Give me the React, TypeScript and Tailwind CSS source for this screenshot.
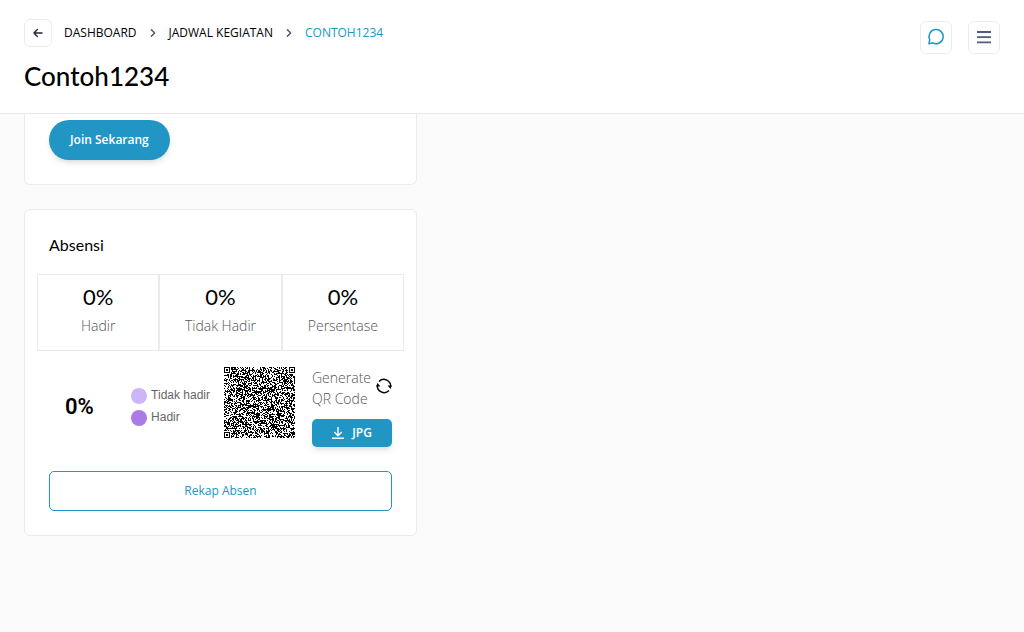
import React from "react";

const ACCENT = "#2196c5";

function Chevron() {
  return (
    <svg width="16" height="16" viewBox="0 0 24 24" fill="none" stroke="#475569" strokeWidth="2" strokeLinecap="round" strokeLinejoin="round" aria-hidden="true">
      <path d="M9.5 7l5 5-5 5" />
    </svg>
  );
}

const MODULES = 85;

function buildCode(): string {
  let seed = 20731;
  const next = () => {
    seed = (seed * 1103515245 + 12345) % 2147483648;
    return seed / 2147483648;
  };
  const finder = (x: number, y: number): boolean | null => {
    const corners = [
      [0, 0],
      [MODULES - 7, 0],
      [0, MODULES - 7],
    ];
    for (const [cx, cy] of corners) {
      const d = Math.max(Math.abs(x - cx - 3), Math.abs(y - cy - 3));
      if (d <= 4) return d !== 2 && d !== 4;
    }
    return null;
  };
  let path = "";
  for (let y = 0; y < MODULES; y++) {
    for (let x = 0; x < MODULES; x++) {
      const fixed = finder(x, y);
      const dark = next() < 0.5;
      if (fixed === null ? dark : fixed) path += `M${x} ${y}h1v1h-1z`;
    }
  }
  return path;
}

const codePath = buildCode();

const stats = [
  { value: "0%", label: "Hadir" },
  { value: "0%", label: "Tidak Hadir" },
  { value: "0%", label: "Persentase" },
];

const legend = [
  { label: "Tidak hadir", dot: "bg-[#cbb5f8]" },
  { label: "Hadir", dot: "bg-[#ab7ae6]" },
];

export default function App() {
  return (
    <div className="min-h-screen bg-[#fbfbfb] font-['Open_Sans',sans-serif] text-black">
      <header className="flex items-start justify-between border-b border-[#e7eaee] bg-white px-6 pt-[19px] pb-5">
        <div>
          <nav aria-label="Breadcrumb" className="flex h-7 items-center gap-2 text-xs">
            <button type="button" aria-label="Kembali" className="mr-1 flex size-7 items-center justify-center rounded-md border border-[#e9ecef]">
              <svg width="14" height="14" viewBox="0 0 24 24" fill="none" stroke="#1e293b" strokeWidth="2.2" strokeLinecap="round" strokeLinejoin="round" aria-hidden="true">
                <path d="M19 12H5M11 6l-6 6 6 6" />
              </svg>
            </button>
            <a href="#dashboard">DASHBOARD</a>
            <Chevron />
            <a href="#jadwal">JADWAL KEGIATAN</a>
            <Chevron />
            <a href="#contoh" aria-current="page" className="text-[#2196c5]">CONTOH1234</a>
          </nav>
          <h1 className="mt-3 font-['Lato',sans-serif] text-[26px] leading-[34px] font-medium">Contoh1234</h1>
        </div>
        <div className="mt-0.5 flex gap-4">
          <button type="button" aria-label="Pesan" className="flex h-[33px] w-8 items-center justify-center rounded-md border border-[#e9ecef]">
            <svg width="20" height="20" viewBox="0 0 24 24" fill="none" stroke={ACCENT} strokeWidth="1.8" strokeLinejoin="round" aria-hidden="true">
              <path d="M3.5 18.8l1-4.7a8.5 8.5 0 1 1 3.6 3.7z" />
            </svg>
          </button>
          <button type="button" aria-label="Menu" className="flex h-[33px] w-8 items-center justify-center rounded-md border border-[#e9ecef]">
            <svg width="14" height="14" viewBox="0 0 14 14" fill="none" stroke="#4f5b80" strokeWidth="1.8" aria-hidden="true">
              <path d="M0 1h14M0 6.2h14M0 11.4h14" />
            </svg>
          </button>
        </div>
      </header>

      <main className="flex max-w-[441px] flex-col gap-6 px-6">
        <section className="rounded-b-md border border-t-0 border-[#e9ebed] bg-white px-6 pt-1.5 pb-6">
          <button type="button" className="h-10 rounded-full bg-[#2196c5] px-[21px] text-xs font-semibold text-white shadow-md">Join Sekarang</button>
        </section>

        <section className="rounded-md border border-[#e9ebed] bg-white pt-6 pb-6">
          <h2 className="px-6 font-['Lato',sans-serif] text-base leading-[22px] font-normal">Absensi</h2>
          <div className="mx-3 mt-[18px] grid grid-cols-3">
            {stats.map((s) => (
              <div key={s.label} className="h-[77px] border border-[#e7eaee] pt-2 text-center">
                <p className="font-['Lato',sans-serif] text-[22px] leading-7">{s.value}</p>
                <p className="mt-1 text-sm leading-[22px] font-light text-[#555]">{s.label}</p>
              </div>
            ))}
          </div>

          <div className="mx-6 mt-4 flex items-start">
            <div className="flex h-20 flex-1 items-center">
              <p className="ml-4 flex-1 font-['Roboto',sans-serif] text-[22px] leading-6 font-semibold">0%</p>
              <ul className="mr-3.5 font-['Liberation_Sans',sans-serif] text-xs text-[#666]">
                {legend.map((l) => (
                  <li key={l.label} className="flex h-[22px] items-center gap-1">
                    <span className={`size-4 rounded-full ${l.dot}`} />
                    <span className="pb-0.5">{l.label}</span>
                  </li>
                ))}
              </ul>
            </div>
            <svg width="71" height="71" viewBox="0 0 85 85" shapeRendering="crispEdges" role="img" aria-label="QR Code">
              <path d={codePath} fill="#000" />
            </svg>
            <div className="ml-[17px] w-20">
              <div className="flex items-start justify-between">
                <p className="text-sm leading-[21px] font-light text-[#555]">Generate<br />QR Code</p>
                <button type="button" aria-label="Buat ulang QR Code" className="mt-[11px] shrink-0">
                  <svg className="block" width="16" height="16" viewBox="0 0 16 16" fill="none" stroke="#000" strokeWidth="1.4" aria-hidden="true">
                    <path d="M3 3.4A6.8 6.8 0 0 1 14.6 9M13 12.6A6.8 6.8 0 0 1 1.4 7" />
                    <path d="M11.6 7.6h4.2l-1.2 3.4zM4.4 8.4H.2L1.4 5z" fill="#000" stroke="none" />
                  </svg>
                </button>
              </div>
              <button type="button" className="mt-2.5 flex h-7 w-full items-center justify-center gap-2 rounded-[5px] bg-[#2196c5] text-xs font-semibold text-white shadow-md">
                <svg width="12" height="12" viewBox="0 0 12 12" fill="none" stroke="currentColor" strokeWidth="1.4" aria-hidden="true">
                  <path d="M6 0v8.5M2.2 5L6 8.7 9.8 5M0 11.3h12" />
                </svg>
                JPG
              </button>
            </div>
          </div>

          <div className="mx-6 mt-6">
            <button type="button" className="h-10 w-full rounded-[5px] border border-[#2196c5] text-xs font-medium text-[#2196c5]">Rekap Absen</button>
          </div>
        </section>
      </main>
    </div>
  );
}
